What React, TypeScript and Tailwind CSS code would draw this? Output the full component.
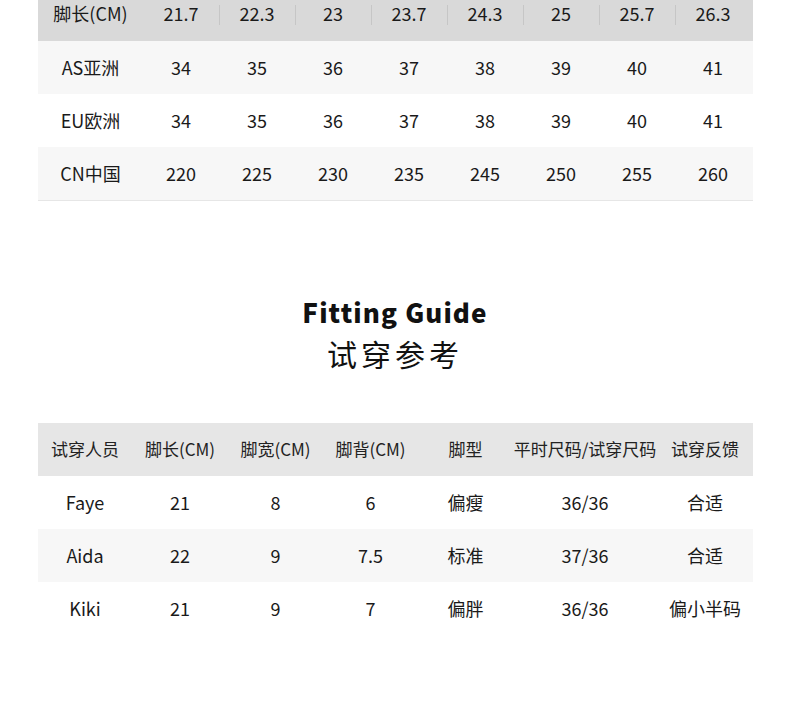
import React from 'react';

const sizeCols = ['21.7', '22.3', '23', '23.7', '24.3', '25', '25.7', '26.3'];

const sizeRows = [
  { label: 'AS亚洲', values: ['34', '35', '36', '37', '38', '39', '40', '41'], bg: 'bg-[#f7f7f7]' },
  { label: 'EU欧洲', values: ['34', '35', '36', '37', '38', '39', '40', '41'], bg: 'bg-white' },
  { label: 'CN中国', values: ['220', '225', '230', '235', '245', '250', '255', '260'], bg: 'bg-[#f7f7f7]' },
];

const fitHeaders = ['试穿人员', '脚长(CM)', '脚宽(CM)', '脚背(CM)', '脚型', '平时尺码/试穿尺码', '试穿反馈'];

const fitRows = [
  { cells: ['Faye', '21', '8', '6', '偏瘦', '36/36', '合适'], bg: 'bg-white' },
  { cells: ['Aida', '22', '9', '7.5', '标准', '37/36', '合适'], bg: 'bg-[#f7f7f7]' },
  { cells: ['Kiki', '21', '9', '7', '偏胖', '36/36', '偏小半码'], bg: 'bg-white' },
];

const SizeTable: React.FC = () => (
  <div className="mx-[38px] w-[715px] border-b border-[#e6e6e6]">
    {/* header row, top part cut off */}
    <div className="grid grid-cols-[105px_repeat(8,76px)] h-[41px] bg-[#d9d9d9] text-[18px] text-[#1a1a1a]">
      <div className="flex items-center justify-center pb-[14px]">脚长(CM)</div>
      {sizeCols.map((c, i) => (
        <div key={c} className="relative flex items-center justify-center pb-[14px]">
          {i > 0 && <span className="absolute left-0 top-[5px] h-[20px] w-px bg-[#c6c6c6]" />}
          {c}
        </div>
      ))}
    </div>
    {sizeRows.map((r) => (
      <div key={r.label} className={`grid grid-cols-[105px_repeat(8,76px)] h-[53px] text-[18px] text-[#1a1a1a] ${r.bg}`}>
        <div className="flex items-center justify-center pb-px">{r.label}</div>
        {r.values.map((v, i) => (
          <div key={i} className="flex items-center justify-center pb-px">{v}</div>
        ))}
      </div>
    ))}
  </div>
);

const FitTable: React.FC = () => (
  <div className="mx-[38px] w-[715px]">
    <div className="grid grid-cols-[94px_96px_95px_95px_95px_144px_96px] h-[53px] bg-[#e6e6e6] text-[17px] text-[#222]">
      {fitHeaders.map((h) => (
        <div key={h} className="flex items-center justify-center whitespace-nowrap pb-px">{h}</div>
      ))}
    </div>
    {fitRows.map((r) => (
      <div key={r.cells[0]} className={`grid grid-cols-[94px_96px_95px_95px_95px_144px_96px] h-[53px] text-[18px] text-[#1a1a1a] ${r.bg}`}>
        {r.cells.map((c, i) => (
          <div key={i} className="flex items-center justify-center whitespace-nowrap">{c}</div>
        ))}
      </div>
    ))}
  </div>
);

export default function App() {
  return (
    <div className="w-[790px] h-[707px] bg-white overflow-hidden" style={{ fontFamily: '"Noto Sans CJK SC", "Noto Sans", sans-serif' }}>
      <SizeTable />
      <div className="flex flex-col items-center pt-[94px] pb-[50px]">
        <h2 className="text-[26px] leading-[33px] font-black tracking-[1.1px] text-[#111]">Fitting Guide</h2>
        <p className="mt-[5px] text-[30px] leading-[40px] tracking-[4px] text-[#111]">试穿参考</p>
      </div>
      <FitTable />
    </div>
  );
}
